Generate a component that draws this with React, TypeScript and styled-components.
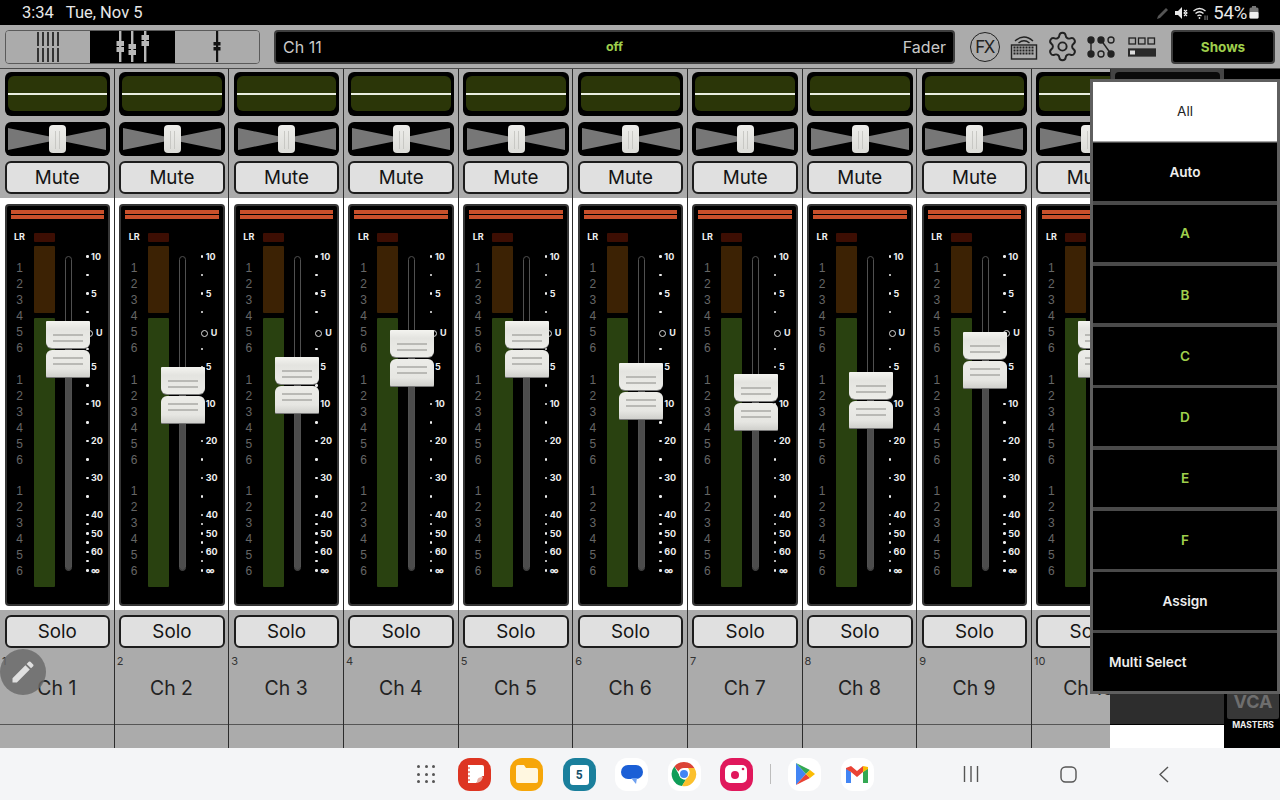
import React from "react";
import styled, { createGlobalStyle } from "styled-components";
import { Settings } from "lucide-react";

const Global = createGlobalStyle`
  html, body { margin: 0; padding: 0; background: #000; }
  * { box-sizing: border-box; }
`;

const FONT = `Inter, "Liberation Sans", sans-serif`;
const GREEN = "#9fcf4c";

const Page = styled.div`
  position: relative;
  width: 1280px;
  height: 800px;
  overflow: hidden;
  display: flex;
  flex-direction: column;
  font-family: ${FONT};
  background: #000;
`;

/* status bar */
const StatusBar = styled.div`
  height: 25px;
  flex: none;
  background: #000;
  color: #e8e8e8;
  display: flex;
  align-items: center;
  padding: 0 21px 0 22px;
  font-family: Roboto, sans-serif;
  font-size: 16.5px;
`;
const StatusDate = styled.span`
  margin-left: 12px;
  flex: 1;
`;
const StatusIcons = styled.div`
  display: flex;
  align-items: center;
  gap: 5px;
`;
const BatteryText = styled.span`
  font-size: 18.5px;
  letter-spacing: -0.2px;
  margin-right: -3px;
`;

/* toolbar */
const Toolbar = styled.div`
  height: 44px;
  flex: none;
  background: #ababab;
  border-bottom: 1px solid #4a4a4a;
  display: flex;
  align-items: center;
  padding: 0 5px 0 4.5px;
`;
const Segments = styled.div`
  width: 255.5px;
  height: 34px;
  border: 1px solid #5a5a5a;
  border-radius: 4px;
  display: flex;
  overflow: hidden;
  flex: none;
`;
const Segment = styled.div<{ $active?: boolean }>`
  flex: 1;
  display: flex;
  align-items: center;
  justify-content: center;
  background: ${(p) => (p.$active ? "#000" : "#ababab")};
`;
const Display = styled.div`
  width: 681px;
  height: 34px;
  margin-left: 14px;
  flex: none;
  background: #000;
  border: 2px solid #3e3e3e;
  border-radius: 4px;
  display: grid;
  grid-template-columns: 1fr auto 1fr;
  align-items: center;
  padding: 0 7px;
  color: #c9c9c9;
  font-size: 16px;
`;
const DisplayOff = styled.span`
  color: ${GREEN};
  font-size: 12.5px;
  font-weight: 700;
`;
const DisplayRight = styled.span`
  text-align: right;
`;
const ToolIcons = styled.div`
  display: flex;
  align-items: center;
  gap: 10px;
  margin-left: 15px;
  flex: none;
  color: #222;
`;
const FxBadge = styled.div`
  width: 30px;
  height: 30px;
  border: 1.5px solid #222;
  border-radius: 50%;
  display: flex;
  align-items: center;
  justify-content: center;
  font-size: 17px;
  letter-spacing: -1.5px;
  padding-right: 1px;
  color: #222;
`;
const GearIcon = styled(Settings)`
  margin: 0 -2px;
`;
const LayoutWrap = styled.div`
  display: flex;
  margin-left: 3px;
`;
const ShowsButton = styled.div`
  width: 104px;
  height: 34px;
  margin-left: 15px;
  flex: none;
  background: #000;
  border: 2px solid #3e3e3e;
  border-radius: 4px;
  display: flex;
  align-items: center;
  justify-content: center;
  color: ${GREEN};
  font-size: 13.5px;
  font-weight: 700;
`;

/* main */
const Main = styled.div`
  height: 679px;
  flex: none;
  display: flex;
  overflow: hidden;
`;
const Channels = styled.div`
  width: 1110px;
  flex: none;
  display: flex;
  overflow: hidden;
`;
const Strip = styled.div`
  width: 114.67px;
  flex: none;
  display: flex;
  flex-direction: column;
  border-right: 1px solid #2c2c2c;
`;
const StripTop = styled.div`
  height: 129px;
  background: #ababab;
  padding: 3px 3.7px 0 4.5px;
  display: flex;
  flex-direction: column;
`;
const EqBlock = styled.div`
  height: 44px;
  background: #000;
  border-radius: 6px;
  padding: 4px 3px 5px;
`;
const EqGraph = styled.div`
  height: 35px;
  background: #2b3608;
  border-radius: 6px;
  display: flex;
  align-items: center;
`;
const EqLine = styled.div`
  height: 2px;
  width: 100%;
  background: #e9eee0;
`;
const PanBlock = styled.div`
  position: relative;
  height: 34px;
  margin-top: 6px;
  background: #000;
  border-radius: 6px;
  display: flex;
  align-items: center;
  justify-content: center;
`;
const PanKnob = styled.div`
  position: absolute;
  top: 3px;
  left: 44.5px;
  width: 17px;
  height: 28px;
  background: linear-gradient(#ededea, #dcdcd8);
  border-radius: 4px;
  display: flex;
  justify-content: center;
  gap: 3px;
  padding: 6px 0 4px;
`;
const PanGrip = styled.div`
  width: 1px;
  background: #c8c8c4;
`;
const RoundButton = styled.div`
  height: 33px;
  background: #e0e0e0;
  border: 2px solid #1d1d1d;
  border-radius: 6px;
  display: flex;
  align-items: center;
  justify-content: center;
  font-size: 18.8px;
  color: #141414;
`;
const MuteButton = styled(RoundButton)`
  margin-top: 5px;
`;
const StripMiddle = styled.div`
  height: 412px;
  background: #fff;
  padding: 6px 3.7px 4px 4.5px;
`;
const FaderPanel = styled.div`
  position: relative;
  height: 402px;
  background: #000;
  border: 2px solid #353535;
  border-radius: 4px;
  padding: 4px 4px 0;
`;
const RedBar = styled.div<{ $h: number }>`
  height: ${(p) => p.$h}px;
  margin-bottom: 1.5px;
  background: #c9502b;
`;
const PanelBody = styled.div`
  display: flex;
  align-items: flex-start;
  padding: 11px 0 0 3px;
`;
const Numbers = styled.div`
  width: 12px;
  margin-right: 8px;
  text-align: center;
  flex: none;
`;
const LrLabel = styled.div`
  height: 10px;
  line-height: 10px;
  font-size: 9px;
  font-weight: 700;
  color: #eee;
  margin-bottom: 18px;
`;
const NumberGroup = styled.div<{ $mb: number }>`
  margin-bottom: ${(p) => p.$mb}px;
`;
const NumberCell = styled.div`
  height: 16px;
  line-height: 16px;
  font-size: 12px;
  font-family: "Liberation Sans", sans-serif;
  color: #666;
`;
const Meter = styled.div`
  width: 21px;
  margin-right: 10px;
  display: flex;
  flex-direction: column;
  flex: none;
`;
const Clip = styled.div`
  height: 9px;
  margin: 1px 0 4px;
  background: #3d0e03;
  border-radius: 1px;
`;
const MeterHot = styled.div`
  height: 67px;
  margin-bottom: 5px;
  background: #3c2204;
  border-radius: 1px;
`;
const MeterLow = styled.div`
  height: 269px;
  background: #294110;
  border-radius: 1px;
`;
const Slot = styled.div`
  position: relative;
  width: 7px;
  height: 315px;
  margin: 24px 13px 0 0;
  border: 1px solid #505050;
  border-radius: 3.5px;
  overflow: hidden;
  flex: none;
`;
const SlotFill = styled.div`
  position: absolute;
  left: -1px;
  right: -1px;
  bottom: -1px;
  background: #4c4c4c;
`;
const Scale = styled.div`
  margin-top: 20px;
  width: 19px;
  flex: none;
`;
const ScaleRow = styled.div<{ $h: number }>`
  height: ${(p) => p.$h}px;
  display: flex;
  align-items: flex-start;
  padding-left: 1.5px;
  white-space: nowrap;
`;
const ScaleDot = styled.div`
  width: 2.5px;
  height: 2.5px;
  margin-top: 3.5px;
  background: #eee;
  border-radius: 50%;
  flex: none;
`;
const ScaleLabel = styled.span`
  margin-left: 2.5px;
  font-size: 9px;
  line-height: 10px;
  font-weight: 700;
  color: #eee;
`;
const UnityRing = styled.div`
  width: 7px;
  height: 7px;
  border: 1px solid #ddd;
  border-radius: 50%;
  margin: 1.5px 3px 0 0;
  flex: none;
`;
const UnityLabel = styled.span`
  font-size: 9px;
  line-height: 10px;
  font-weight: 700;
  color: #eee;
`;
const FaderCap = styled.div<{ $top: number }>`
  position: absolute;
  left: 39.5px;
  top: ${(p) => p.$top}px;
  width: 44px;
  display: flex;
  flex-direction: column;
  gap: 2px;
  filter: drop-shadow(0 1px 0 #777);
`;
const CapUpper = styled.div`
  height: 27px;
  background: linear-gradient(#f4f4f0, #e4e4e0 30%, #ecece8);
  border-radius: 1px 1px 6px 6px;
  padding-top: 13px;
`;
const CapLower = styled.div`
  height: 27px;
  background: linear-gradient(#ecece8, #e6e6e2 70%, #d0d0cc);
  border-radius: 6px 6px 1px 1px;
  padding-top: 7px;
`;
const CapGrip = styled.div`
  height: 1.5px;
  margin: 0 7px 4.5px;
  background: #b9b9b5;
`;
const StripBottom = styled.div`
  height: 138px;
  background: #ababab;
  display: flex;
  flex-direction: column;
`;
const SoloWrap = styled.div`
  padding: 5px 3.7px 0 4.5px;
`;
const NameCell = styled.div`
  flex: 1;
  border-bottom: 1.5px solid #555;
  display: flex;
  flex-direction: column;
  align-items: center;
`;
const ChannelNumber = styled.div`
  align-self: flex-start;
  margin: 6px 0 0 2px;
  font-size: 11px;
  line-height: 14px;
  color: #333;
`;
const ChannelName = styled.div`
  margin-top: 7px;
  font-size: 19.4px;
  line-height: 26px;
  color: #222;
`;
const StripFoot = styled.div`
  height: 23px;
`;

/* masters column behind the menu */
const MasterStrip = styled.div`
  width: 114px;
  flex: none;
  display: flex;
  flex-direction: column;
  background: #2d2d2d;
`;
const MasterHead = styled.div`
  height: 14px;
  margin: 0 0 0 1px;
  background: #444;
  padding: 3px 4px 0;
`;
const MasterHeadInner = styled.div`
  height: 11px;
  background: #0a0a0a;
  border-radius: 4px 4px 0 0;
  border-bottom: 2px dotted #6f7a3a;
`;
const MasterFill = styled.div`
  flex: 1;
  border-bottom: 1.5px solid #000;
`;
const MasterFoot = styled.div`
  height: 23px;
  background: #fff;
`;
const MasterSide = styled.div`
  width: 56px;
  flex: none;
  background: #000;
  display: flex;
  flex-direction: column;
  justify-content: flex-end;
  align-items: center;
  padding: 0 1px 18px 3px;
`;
const VcaBox = styled.div`
  width: 100%;
  height: 36px;
  background: #373737;
  color: #6e6e6e;
  font-size: 18px;
  font-weight: 700;
  line-height: 38px;
  text-align: center;
  border-radius: 2px;
  margin-bottom: 1px;
`;
const MastersLabel = styled.div`
  color: #eee;
  font-size: 8.5px;
  font-weight: 700;
`;

/* menu */
const Menu = styled.div`
  position: absolute;
  left: 1090px;
  top: 79px;
  width: 190px;
  height: 615px;
  background: #4a4a4a;
  border: 3px solid #5f5f5f;
  display: flex;
  flex-direction: column;
  gap: 3.6px;
`;
const MenuItem = styled.div<{ $variant?: string; $left?: boolean }>`
  flex: 1;
  display: flex;
  align-items: center;
  justify-content: ${(p) => (p.$left ? "flex-start" : "center")};
  padding-left: ${(p) => (p.$left ? "16px" : "0")};
  background: ${(p) => (p.$variant === "on" ? "#fff" : "#000")};
  box-shadow: ${(p) => (p.$variant === "on" ? "0 1.5px 0 #fff" : "none")};
  color: ${(p) =>
    p.$variant === "on" ? "#222" : p.$variant === "group" ? GREEN : "#eee"};
  font-size: 13.6px;
  font-weight: ${(p) => (p.$variant === "on" ? 400 : 600)};
`;

/* floating edit */
const EditBubble = styled.div`
  position: absolute;
  left: 0;
  top: 649px;
  width: 46px;
  height: 46px;
  border-radius: 50%;
  background: rgba(105, 105, 105, 0.82);
  display: flex;
  align-items: center;
  justify-content: center;
`;

/* nav bar */
const NavBar = styled.div`
  height: 52px;
  flex: none;
  background: #f4f5f7;
  display: flex;
  align-items: center;
  padding-left: 417px;
`;
const AppGrid = styled.div`
  width: 18px;
  height: 18px;
  display: grid;
  grid-template-columns: repeat(3, 3px);
  grid-template-rows: repeat(3, 3px);
  justify-content: space-between;
  align-content: space-between;
  margin-right: 23px;
`;
const GridDot = styled.div`
  width: 3px;
  height: 3px;
  border-radius: 50%;
  background: #555;
`;
const Dock = styled.div`
  display: flex;
  align-items: center;
  gap: 19.4px;
`;
const DockIcon = styled.div<{ $bg: string }>`
  width: 33px;
  height: 33px;
  border-radius: 12px;
  background: ${(p) => p.$bg};
  display: flex;
  align-items: center;
  justify-content: center;
  flex: none;
`;
const CalendarPage = styled.div`
  width: 19px;
  height: 20px;
  margin-top: 1px;
  background: #fff;
  border-radius: 3px;
  font-size: 12px;
  font-weight: 700;
  color: #16506a;
  display: flex;
  align-items: center;
  justify-content: center;
  font-family: Roboto, sans-serif;
`;
const DockDivider = styled.div`
  width: 1.5px;
  height: 20px;
  background: #bdbdbd;
  margin: 0 -2.4px;
`;
const NavButtons = styled.div`
  display: flex;
  align-items: center;
  margin-left: 89px;
  gap: 81.5px;
`;

/* data */
const faderTops = [321, 367, 357, 330, 321, 363, 374, 372, 332, 321];
const panelOriginY = 206;
const slotBottomY = 570;
const marks: { label?: string; unity?: boolean; h: number }[] = [
  { label: "10", h: 18.5 },
  { h: 18.5 },
  { label: "5", h: 18.5 },
  { h: 21 },
  { unity: true, h: 16 },
  { h: 18 },
  { label: "5", h: 18.5 },
  { h: 18.5 },
  { label: "10", h: 18.5 },
  { h: 18.5 },
  { label: "20", h: 18.5 },
  { h: 18.5 },
  { label: "30", h: 18.5 },
  { h: 18.5 },
  { label: "40", h: 9.25 },
  { h: 9.25 },
  { label: "50", h: 9.25 },
  { h: 9.25 },
  { label: "60", h: 9.25 },
  { h: 9.25 },
  { label: "∞", h: 9.25 },
];

const SegmentIconA = () => (
  <svg width="24" height="30" viewBox="0 0 24 30">
    {[1, 6, 11, 16, 21].map((x) => (
      <g key={x} fill="#333">
        <rect x={x} y="0" width="2" height="14" />
        <rect x={x} y="16" width="2" height="14" />
      </g>
    ))}
  </svg>
);
const SegmentIconB = () => (
  <svg width="34" height="33" viewBox="0 0 34 33">
    {[
      [5, 11],
      [17, 14],
      [30, 5],
    ].map(([x, y]) => (
      <g key={x}>
        <rect x={x - 1} y="1" width="2.4" height="31" fill="#b8b8b8" />
        <rect x={x - 3.5} y={y} width="7.5" height="5" fill="#b8b8b8" />
        <rect x={x - 3.5} y={y + 6} width="7.5" height="5" fill="#b8b8b8" />
      </g>
    ))}
  </svg>
);
const SegmentIconC = () => (
  <svg width="10" height="33" viewBox="0 0 10 33">
    <rect x="4" y="1" width="2.2" height="31" fill="#111" />
    <rect x="1.5" y="12" width="7" height="3.5" fill="#111" />
    <rect x="1.5" y="17" width="7" height="3.5" fill="#111" />
  </svg>
);
const KeyboardIcon = () => (
  <svg width="28" height="30" viewBox="0 0 28 30" fill="none" stroke="#222">
    <path d="M5 9 Q14 1 23 9" strokeWidth="1.4" />
    <path d="M8.5 11 Q14 6.5 19.5 11" strokeWidth="1.4" />
    <rect x="1.5" y="13" width="25" height="14" strokeWidth="1.4" />
    {[15.5, 18.5, 21.5].map((y) => (
      <path key={y} d={`M3.5 ${y}H24.5`} strokeWidth="1.8" strokeDasharray="2 1" />
    ))}
  </svg>
);
const RoutingIcon = () => (
  <svg width="28" height="22" viewBox="0 0 28 22" fill="none" stroke="#222" strokeWidth="1.4">
    <path d="M4 4V18" />
    <path d="M14 4L24 18" />
    <circle cx="4" cy="4" r="3" fill="#222" />
    <circle cx="14" cy="4" r="3" fill="#222" />
    <circle cx="24" cy="4" r="3" />
    <circle cx="4" cy="18" r="3" fill="#222" />
    <circle cx="14" cy="18" r="3" />
    <circle cx="24" cy="18" r="3" fill="#222" />
  </svg>
);
const LayoutIcon = () => (
  <svg width="28" height="20" viewBox="0 0 28 20" fill="none" stroke="#222" strokeWidth="1.3">
    <rect x="1" y="1" width="6.5" height="6" />
    <rect x="10.5" y="1" width="6.5" height="6" />
    <rect x="20" y="1" width="6.5" height="6" />
    <rect x="0.5" y="12" width="27" height="7" fill="#2a2a2a" stroke="#2a2a2a" />
    <rect x="2" y="13.5" width="5" height="4" fill="#ddd" stroke="none" />
  </svg>
);
const PenStatus = () => (
  <svg width="14" height="14" viewBox="0 0 14 14">
    <path d="M1 13l1-3 8-8 2 2-8 8z" fill="#555" />
  </svg>
);
const MuteStatus = () => (
  <svg width="13" height="14" viewBox="0 0 13 14" fill="#e8e8e8">
    <path d="M0 5h3l4-4v12l-4-4H0z" />
    <path d="M9 4l3 3-3 3M12 4L9 7l3 3" stroke="#e8e8e8" strokeWidth="1.2" fill="none" />
  </svg>
);
const WifiStatus = () => (
  <svg width="15" height="14" viewBox="0 0 15 14" fill="none" stroke="#e8e8e8" strokeWidth="1.3">
    <path d="M0.5 5Q6.5 0 12.5 5" />
    <path d="M2.5 7.5Q6.5 4 10.5 7.5" />
    <path d="M4.5 10Q6.5 8.4 8.5 10" />
    <circle cx="6.5" cy="12" r="0.9" fill="#e8e8e8" stroke="none" />
    <path d="M12 14V9.5M14.2 14V9.5" stroke="#888" strokeWidth="1" />
  </svg>
);
const BatteryStatus = () => (
  <svg width="10" height="13" viewBox="0 0 10 13">
    <rect x="3" y="0" width="4" height="2" fill="#777" />
    <rect x="0.5" y="1.5" width="9" height="11" rx="1.5" fill="#777" />
    <rect x="0.5" y="6" width="9" height="6.5" rx="1" fill="#eee" />
  </svg>
);
const EditPencil = () => (
  <svg width="28" height="28" viewBox="0 0 24 24" fill="#e0e0e0">
    <path d="M3 17.25V21h3.75L17.81 9.94l-3.75-3.75L3 17.25zM20.71 7.04a1 1 0 0 0 0-1.41l-2.34-2.34a1 1 0 0 0-1.41 0l-1.83 1.83 3.75 3.75 1.83-1.83z" />
  </svg>
);
const NotesGlyph = () => (
  <svg width="22" height="22" viewBox="0 0 22 22">
    <path d="M4 2h14a2 2 0 0 1 2 2v9c-3 0-2 1-3 3-1 3-3 2-5 4H4z" fill="#fff" />
    <path d="M13 20c0-4 1-6 6-6-1 3-2 5-6 6z" fill="#e8b0a6" />
    <path d="M3 5h3M3 9h3M3 13h3M3 17h3" stroke="#d9381e" strokeWidth="1.2" />
  </svg>
);
const FolderGlyph = () => (
  <svg width="24" height="20" viewBox="0 0 24 20">
    <path d="M1 3a2 2 0 0 1 2-2h6l2 3h10a2 2 0 0 1 2 2v11a2 2 0 0 1-2 2H3a2 2 0 0 1-2-2z" fill="#fff7e0" />
  </svg>
);
const BubbleGlyph = () => (
  <svg width="24" height="24" viewBox="0 0 24 24">
    <rect x="1" y="3" width="22" height="14" rx="7" fill="#1b5fd6" />
    <path d="M11 16h6l-1 6z" fill="#6ea0f0" />
  </svg>
);
const ChromeGlyph = () => (
  <svg width="26" height="26" viewBox="0 0 26 26">
    <path d="M13 1a12 12 0 0 1 10.4 6H13a6 6 0 0 0-5.6 3.6L3.4 5.5A12 12 0 0 1 13 1z" fill="#db4437" />
    <path d="M3.4 5.5l5 8.7a6 6 0 0 0 6.7 4.4L11 25a12 12 0 0 1-7.6-19.5z" fill="#0f9d58" />
    <path d="M23.4 7A12 12 0 0 1 11 25l5.3-9a6 6 0 0 0 .7-9z" fill="#fbc02d" />
    <circle cx="13" cy="13" r="5" fill="#fff" />
    <circle cx="13" cy="13" r="4" fill="#4285f4" />
  </svg>
);
const CameraGlyph = () => (
  <svg width="24" height="20" viewBox="0 0 24 20">
    <rect x="1" y="1" width="22" height="18" rx="5" fill="#fff" />
    <circle cx="11" cy="11" r="4" fill="#e0185c" />
    <circle cx="19" cy="5" r="1.3" fill="#e0185c" />
  </svg>
);
const PlayGlyph = () => (
  <svg width="22" height="24" viewBox="0 0 22 24">
    <path d="M2 1l10 11L2 23z" fill="#4285f4" />
    <path d="M2 1l14 7-4 4z" fill="#34a853" />
    <path d="M2 23l14-7-4-4z" fill="#ea4335" />
    <path d="M16 8l5 4-5 4-4-4z" fill="#fbbc04" />
  </svg>
);
const GmailGlyph = () => (
  <svg width="24" height="18" viewBox="0 0 24 18">
    <path d="M1 3v15h5V7z" fill="#4285f4" />
    <path d="M23 3v15h-5V7z" fill="#34a853" />
    <path d="M1 3l5-2 6 5 6-5v6l-6 5-6-5-5-3z" fill="#ea4335" />
    <path d="M18 1l5 1v2l-5 3z" fill="#fbbc04" />
  </svg>
);
const BowTie = () => (
  <svg width="98" height="22" viewBox="0 0 98 22">
    <path d="M0 0L49 10 98 0V22L49 12 0 22z" fill="#777" />
  </svg>
);
const RecentsIcon = () => (
  <svg width="16" height="18" viewBox="0 0 16 18" stroke="#555" strokeWidth="1.4">
    <path d="M1.5 1V17M8 1V17M14.5 1V17" />
  </svg>
);
const HomeIcon = () => (
  <svg width="17" height="17" viewBox="0 0 17 17" fill="none" stroke="#555" strokeWidth="1.4">
    <rect x="1" y="1" width="15" height="15" rx="4.5" />
  </svg>
);
const BackIcon = () => (
  <svg width="10" height="17" viewBox="0 0 10 17" fill="none" stroke="#555" strokeWidth="1.4">
    <path d="M9 1L1 8.5l8 7.5" />
  </svg>
);

const numberGroups = [16, 15, 0];

const ChannelStrip = ({ index, top }: { index: number; top: number }) => {
  const capTop = top - panelOriginY;
  return (
    <Strip>
      <StripTop>
        <EqBlock>
          <EqGraph>
            <EqLine />
          </EqGraph>
        </EqBlock>
        <PanBlock>
          <BowTie />
          <PanKnob>
            <PanGrip />
            <PanGrip />
          </PanKnob>
        </PanBlock>
        <MuteButton>Mute</MuteButton>
      </StripTop>
      <StripMiddle>
        <FaderPanel>
          <RedBar $h={3.5} />
          <RedBar $h={4} />
          <PanelBody>
            <Numbers>
              <LrLabel>LR</LrLabel>
              {numberGroups.map((mb, g) => (
                <NumberGroup key={g} $mb={mb}>
                  {[1, 2, 3, 4, 5, 6].map((n) => (
                    <NumberCell key={n}>{n}</NumberCell>
                  ))}
                </NumberGroup>
              ))}
            </Numbers>
            <Meter>
              <Clip />
              <MeterHot />
              <MeterLow />
            </Meter>
            <Slot>
              <SlotFill style={{ height: slotBottomY - top }} />
            </Slot>
            <Scale>
              {marks.map((m, i) => (
                <ScaleRow key={i} $h={m.h}>
                  {m.unity ? (
                    <>
                      <UnityRing />
                      <UnityLabel>U</UnityLabel>
                    </>
                  ) : (
                    <>
                      <ScaleDot />
                      {m.label && <ScaleLabel>{m.label}</ScaleLabel>}
                    </>
                  )}
                </ScaleRow>
              ))}
            </Scale>
          </PanelBody>
          <FaderCap $top={capTop}>
            <CapUpper>
              <CapGrip />
              <CapGrip />
            </CapUpper>
            <CapLower>
              <CapGrip />
              <CapGrip />
            </CapLower>
          </FaderCap>
        </FaderPanel>
      </StripMiddle>
      <StripBottom>
        <SoloWrap>
          <RoundButton>Solo</RoundButton>
        </SoloWrap>
        <NameCell>
          <ChannelNumber>{index}</ChannelNumber>
          <ChannelName>Ch {index}</ChannelName>
        </NameCell>
        <StripFoot />
      </StripBottom>
    </Strip>
  );
};

const menuItems: { label: string; variant?: string; left?: boolean }[] = [
  { label: "All", variant: "on" },
  { label: "Auto" },
  { label: "A", variant: "group" },
  { label: "B", variant: "group" },
  { label: "C", variant: "group" },
  { label: "D", variant: "group" },
  { label: "E", variant: "group" },
  { label: "F", variant: "group" },
  { label: "Assign" },
  { label: "Multi Select", left: true },
];

export default function App() {
  return (
    <Page>
      <Global />
      <StatusBar>
        <span>3:34</span>
        <StatusDate>Tue, Nov 5</StatusDate>
        <StatusIcons>
          <PenStatus />
          <MuteStatus />
          <WifiStatus />
          <BatteryText>54%</BatteryText>
          <BatteryStatus />
        </StatusIcons>
      </StatusBar>
      <Toolbar>
        <Segments>
          <Segment>
            <SegmentIconA />
          </Segment>
          <Segment $active>
            <SegmentIconB />
          </Segment>
          <Segment>
            <SegmentIconC />
          </Segment>
        </Segments>
        <Display>
          <span>Ch 11</span>
          <DisplayOff>off</DisplayOff>
          <DisplayRight>Fader</DisplayRight>
        </Display>
        <ToolIcons>
          <FxBadge>FX</FxBadge>
          <KeyboardIcon />
          <GearIcon size={33} strokeWidth={1.4} color="#222" />
          <RoutingIcon />
          <LayoutWrap>
            <LayoutIcon />
          </LayoutWrap>
        </ToolIcons>
        <ShowsButton>Shows</ShowsButton>
      </Toolbar>
      <Main>
        <Channels>
          {faderTops.map((top, i) => (
            <ChannelStrip key={i} index={i + 1} top={top} />
          ))}
        </Channels>
        <MasterStrip>
          <MasterHead>
            <MasterHeadInner />
          </MasterHead>
          <MasterFill />
          <MasterFoot />
        </MasterStrip>
        <MasterSide>
          <VcaBox>VCA</VcaBox>
          <MastersLabel>MASTERS</MastersLabel>
        </MasterSide>
      </Main>
      <NavBar>
        <AppGrid>
          {Array.from({ length: 9 }).map((_, i) => (
            <GridDot key={i} />
          ))}
        </AppGrid>
        <Dock>
          <DockIcon $bg="#dd3522">
            <NotesGlyph />
          </DockIcon>
          <DockIcon $bg="#f6a609">
            <FolderGlyph />
          </DockIcon>
          <DockIcon $bg="#1a7f9c">
            <CalendarPage>5</CalendarPage>
          </DockIcon>
          <DockIcon $bg="#fff">
            <BubbleGlyph />
          </DockIcon>
          <DockIcon $bg="#fff">
            <ChromeGlyph />
          </DockIcon>
          <DockIcon $bg="#e0185c">
            <CameraGlyph />
          </DockIcon>
          <DockDivider />
          <DockIcon $bg="#fff">
            <PlayGlyph />
          </DockIcon>
          <DockIcon $bg="#fff">
            <GmailGlyph />
          </DockIcon>
        </Dock>
        <NavButtons>
          <RecentsIcon />
          <HomeIcon />
          <BackIcon />
        </NavButtons>
      </NavBar>
      <Menu>
        {menuItems.map((m) => (
          <MenuItem key={m.label} $variant={m.variant} $left={m.left}>
            {m.label}
          </MenuItem>
        ))}
      </Menu>
      <EditBubble>
        <EditPencil />
      </EditBubble>
    </Page>
  );
}
